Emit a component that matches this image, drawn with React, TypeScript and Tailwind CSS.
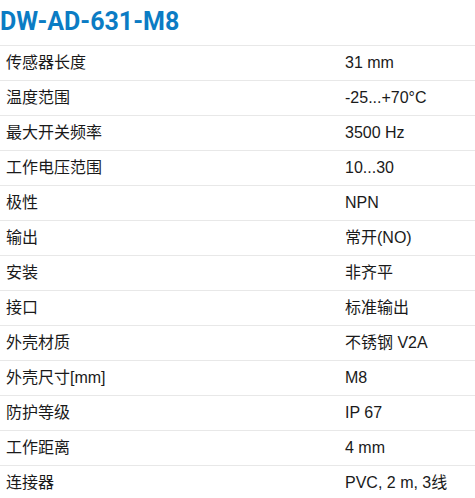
import React from "react";

const rows: [string, string][] = [
  ["传感器长度", "31 mm"],
  ["温度范围", "-25...+70°C"],
  ["最大开关频率", "3500 Hz"],
  ["工作电压范围", "10...30"],
  ["极性", "NPN"],
  ["输出", "常开(NO)"],
  ["安装", "非齐平"],
  ["接口", "标准输出"],
  ["外壳材质", "不锈钢 V2A"],
  ["外壳尺寸[mm]", "M8"],
  ["防护等级", "IP 67"],
  ["工作距离", "4 mm"],
  ["连接器", "PVC, 2 m, 3线"],
];

export default function App() {
  return (
    <div className="w-[475px] bg-white text-[#1a1a1a]">
      <div className="h-[45px] flex items-center">
        <h1
          className="text-[25px] font-bold leading-none text-[#0b7cc4] -mt-[2px]"
          style={{ fontFamily: 'Roboto, sans-serif' }}
        >
          DW-AD-631-M8
        </h1>
      </div>
      <div style={{ fontFamily: '"Liberation Sans", "Noto Sans CJK SC", sans-serif' }}>
        {rows.map(([k, v]) => (
          <div key={k} className="grid grid-cols-[339px_1fr] h-[35px] border-t border-[#e8e8e8] items-center text-[16px]">
            <div className="pl-[6px]">{k}</div>
            <div className="pl-[6px]">{v}</div>
          </div>
        ))}
      </div>
    </div>
  );
}
